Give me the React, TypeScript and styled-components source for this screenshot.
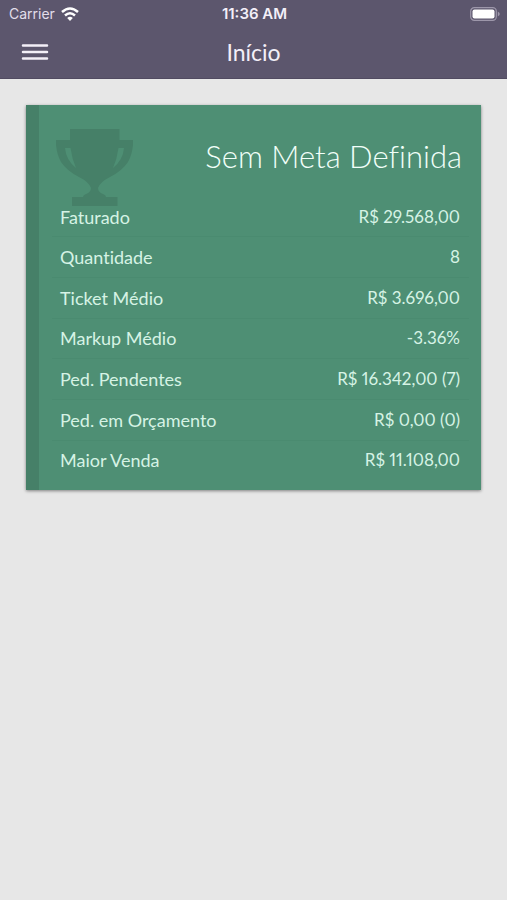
import React from "react";
import styled, { createGlobalStyle } from "styled-components";

const GlobalStyle = createGlobalStyle`
  * { box-sizing: border-box; }
  body {
    margin: 0;
    background: #e7e7e7;
    font-family: Lato, "Open Sans", sans-serif;
    font-variant-ligatures: none;
  }
`;

const Header = styled.header`
  background: #5c566d;
  color: #f3eff8;
  border-bottom: 1px solid #514b61;
`;

const StatusBar = styled.div`
  display: grid;
  grid-template-columns: 1fr auto 1fr;
  align-items: center;
  height: 27px;
  padding: 0 7px 0 9px;
  font: 14px/27px Inter, sans-serif;
`;

const Carrier = styled.div`
  display: flex;
  align-items: center;
  gap: 6px;
  color: #e2deea;
`;

const Clock = styled.time`
  font-size: 15px;
  font-weight: 600;
`;

const BatteryIcon = styled.svg`
  justify-self: end;
`;

const NavBar = styled.nav`
  display: grid;
  grid-template-columns: 1fr auto 1fr;
  align-items: center;
  height: 51px;
  padding: 0 20px 2px;
`;

const MenuButton = styled.button`
  display: flex;
  justify-self: start;
  padding: 0;
  border: 0;
  background: none;
  color: inherit;
  cursor: pointer;
`;

const PageTitle = styled.h1`
  margin: 0;
  font-size: 23px;
  line-height: 48px;
  font-weight: 400;
`;

const Content = styled.main`
  padding: 26px;
`;

const Card = styled.section`
  padding: 24px 12px 10px 13px;
  border-left: 13px solid #468068;
  background: #4e8f74;
  color: #d6f3e5;
  box-shadow: 0 1px 3px rgba(0, 0, 0, 0.45);
`;

const CardHeader = styled.header`
  display: flex;
  align-items: flex-start;
  justify-content: space-between;
  height: 68px;
  padding: 0 7px 0 4px;
`;

const CardTitle = styled.h2`
  margin: 0;
  color: #f1fff9;
  font-size: 31px;
  line-height: 54px;
  font-weight: 300;
`;

const Summary = styled.table`
  position: relative;
  width: 100%;
  height: 283px;
  border-collapse: collapse;
  font-size: 18px;
  line-height: 24px;
`;

const Row = styled.tr`
  &:not(:last-child) {
    border-bottom: 1px solid #4a8b70;
  }
`;

const Label = styled.th`
  padding: 0 8px;
  font-weight: 400;
  text-align: left;
`;

const Value = styled.td`
  padding: 0 9px;
  font-size: 17px;
  font-variant-numeric: proportional-nums;
  text-align: right;
`;

const metrics = [
  ["Faturado", "R$ 29.568,00"],
  ["Quantidade", "8"],
  ["Ticket Médio", "R$ 3.696,00"],
  ["Markup Médio", "-3.36%"],
  ["Ped. Pendentes", "R$ 16.342,00 (7)"],
  ["Ped. em Orçamento", "R$ 0,00 (0)"],
  ["Maior Venda", "R$ 11.108,00"],
];

const Wifi = () => (
  <svg width="18" height="14" viewBox="0 0 18 14" fill="none" stroke="#fff" strokeWidth="2.5" aria-hidden="true">
    <path d="M1 5Q9 -2 17 5" />
    <path d="M4 8.5Q9 4 14 8.5" />
    <path d="M9 14 6.2 11Q9 8.7 11.8 11Z" fill="#fff" stroke="none" />
  </svg>
);

const Battery = () => (
  <BatteryIcon width="30" height="14" viewBox="0 0 30 14" role="img" aria-label="Bateria">
    <rect x=".7" y=".7" width="25.6" height="12.6" rx="3.6" fill="none" stroke="#9d97aa" strokeWidth="1.2" />
    <rect x="2.5" y="2.5" width="22" height="9" rx="2" fill="#fff" />
    <path d="M27.8 4.5Q31.8 7 27.8 9.5Z" fill="#9d97aa" />
  </BatteryIcon>
);

const Trophy = () => (
  <svg width="77" height="77" viewBox="0 0 77 77" fill="#468068" aria-hidden="true">
    <path
      fillRule="evenodd"
      d="M14 0H63.5V11H77V16Q76 26 72 33Q66 42 54 48Q44 53 42 59Q42 63 47 65Q50 66 50 68H61.5V77H16V68H27Q27 66 30 65Q35 63 35 59Q33 53 23 48Q11 42 5 33Q1 26 0 16V11H14ZM9 19Q10 31 20 39Q16 30 14.5 19ZM68 19H62.5Q61 30 57 39Q67 31 68 19Z"
    />
  </svg>
);

export default function App() {
  return (
    <>
      <GlobalStyle />
      <Header>
        <StatusBar>
          <Carrier>
            Carrier
            <Wifi />
          </Carrier>
          <Clock>11:36 AM</Clock>
          <Battery />
        </StatusBar>
        <NavBar>
          <MenuButton type="button" aria-label="Menu">
            <svg width="30" height="20" viewBox="0 0 30 20" stroke="currentColor" strokeWidth="2.5" strokeLinecap="round" aria-hidden="true">
              <path d="M3 3.5H27M3 10H27M3 16.5H27" />
            </svg>
          </MenuButton>
          <PageTitle>Início</PageTitle>
        </NavBar>
      </Header>
      <Content>
        <Card>
          <CardHeader>
            <Trophy />
            <CardTitle>Sem Meta Definida</CardTitle>
          </CardHeader>
          <Summary>
            <tbody>
              {metrics.map(([label, value]) => (
                <Row key={label}>
                  <Label scope="row">{label}</Label>
                  <Value>{value}</Value>
                </Row>
              ))}
            </tbody>
          </Summary>
        </Card>
      </Content>
    </>
  );
}
